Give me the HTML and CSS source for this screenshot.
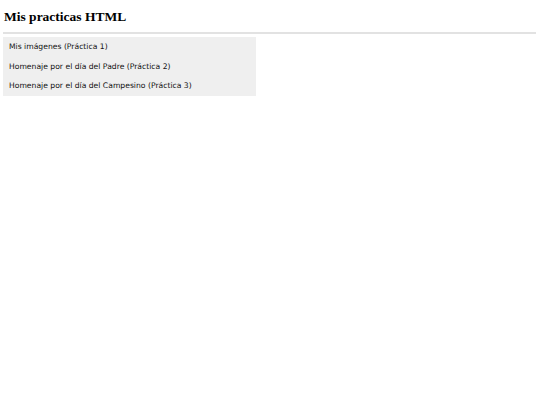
FILE: index.html
```html
<!DOCTYPE html>
<html lang="es">
<head>
<meta charset="utf-8">
<title>Mis practicas HTML</title>
<link rel="stylesheet" href="styles.css">
</head>
<body>
<header class="top">
  <h1 class="title">Mis practicas HTML</h1>
  <hr class="rule">
</header>
<nav class="menu">
  <ul class="list">
    <li class="item"><a class="link" href="#">Mis imágenes (Práctica 1)</a></li>
    <li class="item"><a class="link" href="#">Homenaje por el día del Padre (Práctica 2)</a></li>
    <li class="item"><a class="link" href="#">Homenaje por el día del Campesino (Práctica 3)</a></li>
  </ul>
</nav>
</body>
</html>
```
FILE: styles.css
```css
html, body {
  margin: 0;
  padding: 0;
  background: #fff;
}
body {
  padding: 0 4px 0 3px;
}
.top {
  padding-top: 7px;
}
.title {
  margin: 0 0 0 1px;
  font-family: "Liberation Serif", "Times New Roman", serif;
  font-weight: bold;
  font-size: 13.5px;
  line-height: 19px;
  color: #000;
}
.rule {
  margin: 6px 0 0 0;
  border: 0;
  height: 2px;
  background: #e2e2e2;
}
.menu {
  margin-top: 3px;
  width: 253px;
  background: #efefef;
}
.list {
  list-style: none;
  margin: 0;
  padding: 0;
}
.item {
  height: 19.5px;
  display: flex;
  align-items: center;
  padding-left: 6px;
}
.link {
  font-family: "DejaVu Sans", Verdana, sans-serif;
  font-size: 7.65px;
  color: #111;
  text-decoration: none;
}
```
